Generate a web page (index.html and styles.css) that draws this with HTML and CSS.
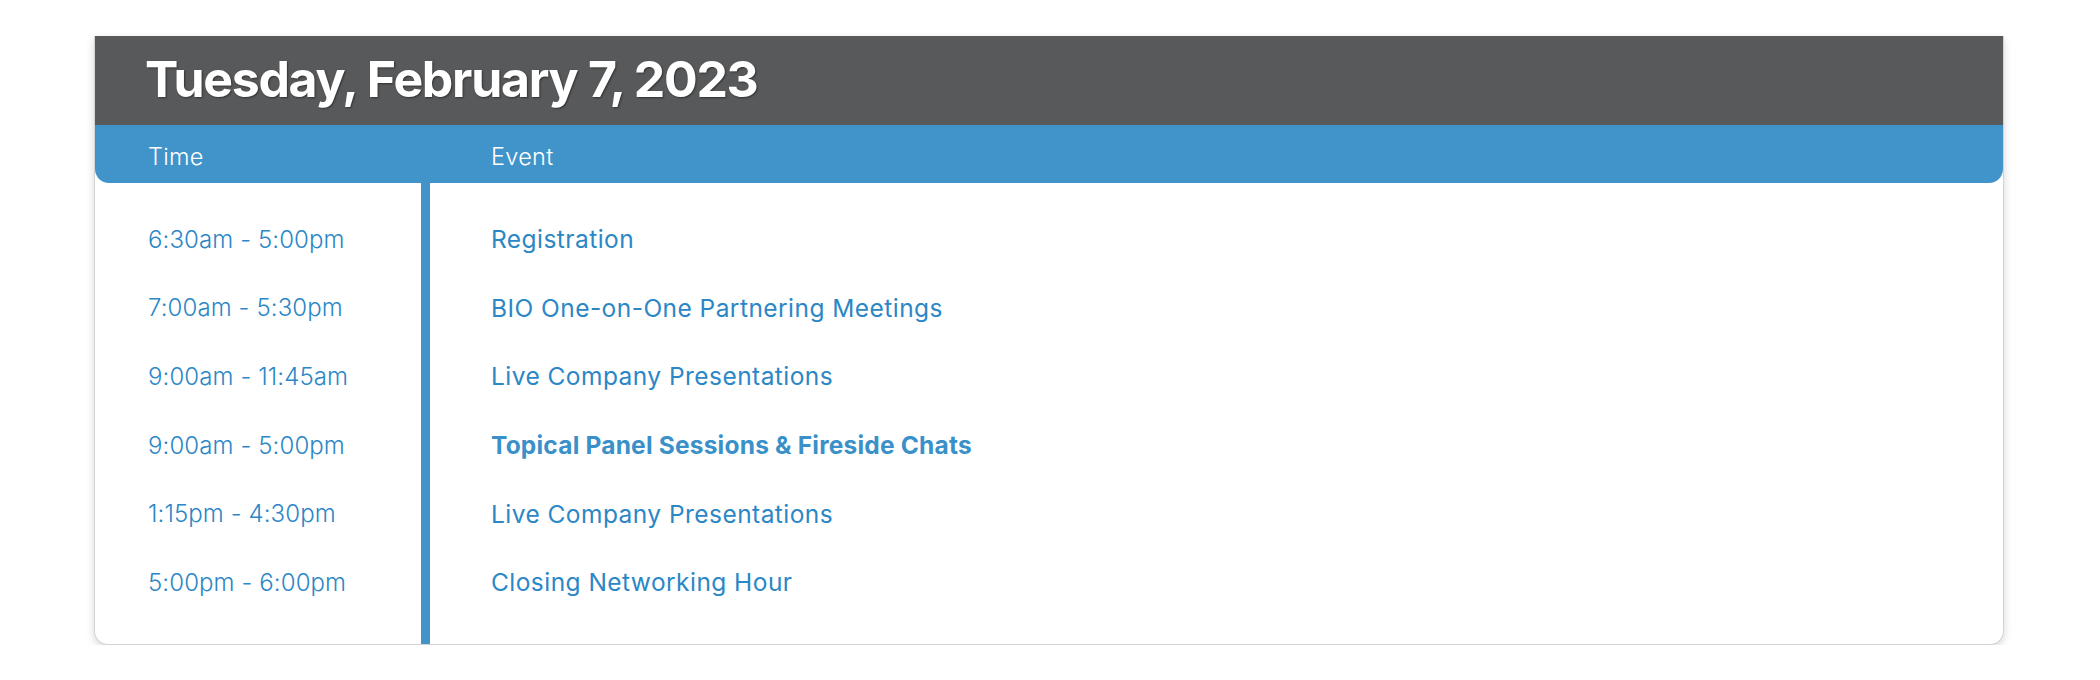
FILE: index.html
```html
<!DOCTYPE html>
<html lang="en">
<head>
<meta charset="utf-8">
<title>Schedule</title>
<link rel="stylesheet" href="styles.css">
</head>
<body>
<section class="card">
  <header class="day-bar">
    <h2 class="day-title">Tuesday, February 7, 2023</h2>
  </header>
  <div class="col-head">
    <div class="col-head-time">Time</div>
    <div class="col-head-event">Event</div>
  </div>
  <div class="schedule">
    <div class="times">
      <div class="row">6:30am - 5:00pm</div>
      <div class="row">7:00am - 5:30pm</div>
      <div class="row">9:00am - 11:45am</div>
      <div class="row">9:00am - 5:00pm</div>
      <div class="row">1:15pm - 4:30pm</div>
      <div class="row">5:00pm - 6:00pm</div>
    </div>
    <div class="events">
      <div class="row">Registration</div>
      <div class="row">BIO One-on-One Partnering Meetings</div>
      <div class="row">Live Company Presentations</div>
      <div class="row row-strong">Topical Panel Sessions &amp; Fireside Chats</div>
      <div class="row">Live Company Presentations</div>
      <div class="row">Closing Networking Hour</div>
    </div>
  </div>
</section>
</body>
</html>
```

FILE: styles.css
```css
html, body {
  margin: 0;
  padding: 0;
  background: #ffffff;
}

body {
  font-family: Inter, "Noto Sans", sans-serif;
  padding: 36px 96px 0 94px;
}

.card {
  background: #ffffff;
  border: 1px solid #d3d3d3;
  border-top: none;
  border-radius: 0 0 14px 14px;
  box-shadow: 0 3px 9px rgba(0, 0, 0, 0.16);
  overflow: hidden;
}

.day-bar {
  background: #58595b;
  height: 89px;
  box-sizing: border-box;
  padding: 0 0 0 50px;
  display: flex;
  align-items: center;
}

.day-title {
  margin: -4px 0 0 0;
  color: #ffffff;
  font-size: 50px;
  font-weight: 700;
  letter-spacing: -1.3px;
  line-height: 1;
  text-shadow: 1px 1px 2px rgba(0, 0, 0, 0.45);
}

.col-head {
  background: #4194ca;
  height: 58px;
  box-sizing: border-box;
  padding-top: 4px;
  border-radius: 0 0 14px 14px;
  display: grid;
  grid-template-columns: 342px 1fr;
  align-items: center;
  color: #ffffff;
  font-size: 23.5px;
  font-weight: 300;
  letter-spacing: 0.3px;
}

.col-head-time {
  padding-left: 53px;
}

.col-head-event {
  padding-left: 54px;
}

.schedule {
  display: grid;
  grid-template-columns: 326px 1fr;
}

.times,
.events {
  padding: 22px 0 27px 0;
}

.times {
  padding-left: 53px;
}

.events {
  border-left: 9px solid #4194ca;
  padding-left: 61px;
}

.row {
  height: 68.6px;
  display: flex;
  align-items: center;
  color: #2b87c6;
  font-size: 24.5px;
  font-weight: 400;
  letter-spacing: 0.45px;
}

.times .row {
  font-size: 24px;
  font-weight: 300;
  letter-spacing: 0.1px;
}

.row-strong {
  font-weight: 700;
  color: #3a90c9;
  letter-spacing: 0.2px;
}
```
